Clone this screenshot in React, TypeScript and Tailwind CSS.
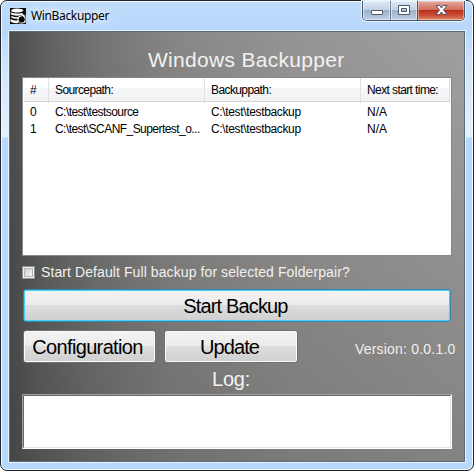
import React from "react";

const rows = [
  { id: "0", source: "C:\\test\\testsource", backup: "C:\\test\\testbackup", next: "N/A" },
  { id: "1", source: "C:\\test\\SCANF_Supertest_o...", backup: "C:\\test\\testbackup", next: "N/A" },
];

function AppIcon() {
  return (
    <svg width="16" height="16" viewBox="0 0 16 16">
      <rect width="16" height="16" fill="#0a0a0a" />
      <path d="M2 1.500Q6 -.3 12 1.200L13.500 2.500Q12 4.500 8 4.500Q3 4.500 1 3Z" fill="#fff" />
      <path d="M.5 4.200Q4 6.400 12.500 5V7Q5 8.500 1 6.500ZM1 8Q5 9.800 9 8.800L8 10.600Q4 11 1.500 9.800ZM.5 11Q3 13 7.500 12.300L8.500 15Q3.500 15.800 .5 13.500Z" fill="#fff" />
      <path d="M9.500 7.800L12 6.200L15.500 7V14.500L12.500 15.600H9L7.500 12.500V10Z" fill="#fff" />
      <circle cx="11.700" cy="11.500" r="3.100" fill="#050505" />
      <path d="M10.500 7.500L13 9M15 6V8.500M8.500 14.500L10.500 15.500" stroke="#111" />
    </svg>
  );
}

function CaptionButtons() {
  return (
    <div className="flex h-[20px] w-[103px] overflow-hidden rounded-b-[5px] border border-t-0 border-[#4c5a70] shadow-[0_0_0_1px_#e6f2ff]">
      <div className="flex w-[28px] items-center justify-center border-r border-[#6b7c94] bg-[linear-gradient(#dce8f5_0%,#c3d3e5_45%,#9cb0c9_50%,#bdd1e8_100%)] pb-px shadow-[inset_0_0_0_1px_#ffffff80]">
        <svg width="14" height="14" viewBox="0 0 14 14">
          <rect x="1.500" y="7.500" width="11" height="4" rx=".5" fill="#fff" stroke="#535666" />
        </svg>
      </div>
      <div className="flex w-[27px] items-center justify-center border-r border-[#6b4450] bg-[linear-gradient(#dce8f5_0%,#c3d3e5_45%,#9cb0c9_50%,#bdd1e8_100%)] pb-px shadow-[inset_0_0_0_1px_#ffffff80]">
        <svg width="12" height="12" viewBox="0 0 12 12">
          <path d="M.5 1.500H11.500V10.500H.5ZM3.500 4.500V7.500H8.500V4.500Z" fill="#fff" fillRule="evenodd" stroke="#535666" />
        </svg>
      </div>
      <div className="flex flex-1 items-center justify-center bg-[linear-gradient(#e5a99f_0%,#d2705f_45%,#b8301d_50%,#c94c35_75%,#e08a67_100%)] pb-px shadow-[inset_0_0_0_1px_#ffffff60]">
        <svg width="13" height="12" viewBox="0 0 13 12">
          <path d="M1 1.500H4.500L6.500 4L8.500 1.500H12L8.500 6L12 10.500H8.500L6.500 8L4.500 10.500H1L4.500 6Z" fill="#fff" stroke="#535666" />
        </svg>
      </div>
    </div>
  );
}

function PushButton({ children, className }: { children: React.ReactNode; className: string }) {
  return (
    <button className={`flex h-[33px] items-center justify-center whitespace-nowrap rounded-[3px] border bg-[linear-gradient(#f3f3f3_0%,#ebebeb_49%,#dddddd_50%,#cfcfcf_100%)] text-[20px] leading-none text-black ${className}`}>
      {children}
    </button>
  );
}

export default function App() {
  return (
    <div className="h-[471px] w-[474px] bg-white font-['Liberation_Sans',Arial,sans-serif]">
      <div className="flex h-[471px] flex-col rounded-[7px] border border-[#20242c] bg-[linear-gradient(#c0dcfb_0px,#b7d8fb_30px,#cde3fc_60px,#e6f1fd_136px,#b7d8fb_137px,#b7d8fb_100%)] px-[7px] shadow-[inset_0_0_0_1px_#f4faff]">
        <header className="flex h-[29px] shrink-0 justify-between">
          <div className="flex items-start pl-[2px] pt-[7px]">
            <AppIcon />
            <span className="ml-[5px] whitespace-nowrap font-['Noto_Sans',sans-serif] text-[12px] leading-[15px] tracking-[-0.35px] text-black [text-shadow:0_0_8px_#fff,0_0_8px_#fff]">WinBackupper</span>
          </div>
          <div className="mr-px">
            <CaptionButtons />
          </div>
        </header>
        <main className="h-[433px] shrink-0 border border-[#e7f4ff]">
          <div className="flex h-[431px] flex-col border border-[#5b6c7c] bg-[linear-gradient(#00000000,#0000002e),linear-gradient(92deg,#4c4c4c_0%,#636362_9%,#757574_20%,#888786_36%,#969593_62%,#a1a09e_100%)] px-3">
            <h1 className="mt-[15px] h-[30px] whitespace-nowrap pl-[126px] text-[21px] leading-[25px] tracking-[0.3px] text-[#f2f2f2]">Windows Backupper</h1>
            <section className="h-[179px] w-[430px] shrink-0 border border-[#828790] bg-white text-[12px] text-black">
              <div className="mx-px grid h-[24px] grid-cols-[25px_156px_156px_1fr] border-b border-[#d5d5d5] bg-[linear-gradient(#fff_0%,#fff_42%,#f5f6f7_45%,#f1f2f3_100%)] leading-[25px] tracking-[-0.6px]">
                <span className="border-r border-[#dfe0e1] pl-[6px]">#</span>
                <span className="border-r border-[#dfe0e1] pl-[6px]">Sourcepath:</span>
                <span className="border-r border-[#dfe0e1] pl-[6px]">Backuppath:</span>
                <span className="border-r border-[#dfe0e1] pl-[6px]">Next start time:</span>
              </div>
              <div className="pt-[2px]">
                {rows.map((row) => (
                  <div key={row.id} className="grid h-[17px] grid-cols-[26px_156px_156px_1fr] whitespace-nowrap leading-[17px]">
                    <span className="pl-[7px]">{row.id}</span>
                    <span className="pl-[6px] tracking-[-0.55px]">{row.source}</span>
                    <span className="pl-[6px] tracking-[-0.35px]">{row.backup}</span>
                    <span className="pl-[6px]">{row.next}</span>
                  </div>
                ))}
              </div>
            </section>
            <label className="mt-[8px] flex h-[16px] shrink-0 items-center whitespace-nowrap text-[14px] leading-[16px] tracking-[0.09px] text-[#f0f0f0]">
              <span className="mr-[6px] flex size-[13px] items-center justify-center border border-[#8e8f8f] bg-[#f4f4f4]">
                <span className="size-[9px] border border-[#aeb3b9] bg-[linear-gradient(135deg,#cbcfd5,#f6f6f6)]" />
              </span>
              <span>Start Default Full backup for selected Folderpair?</span>
            </label>
            <PushButton className="ml-px mt-[9px] w-[428px] shrink-0 border-[#3287b4] pr-[3px] tracking-[-0.85px] shadow-[inset_0_0_0_1px_#48d0f7]">Start Backup</PushButton>
            <div className="mt-[8px] flex h-[33px] shrink-0 items-center">
              <PushButton className="ml-px w-[133px] shrink-0 border-[#707070] pr-[4px] tracking-[-0.65px] shadow-[inset_0_0_0_1px_#fbfbfb]">Configuration</PushButton>
              <PushButton className="ml-[8px] w-[134px] shrink-0 border-[#707070] pr-[3px] tracking-[-0.9px] shadow-[inset_0_0_0_1px_#fbfbfb]">Update</PushButton>
              <span className="ml-[57px] mt-[5px] whitespace-nowrap text-[14px] leading-[16px] tracking-[0.2px] text-[#f0f0f0]">Version: 0.0.1.0</span>
            </div>
            <h2 className="mb-[6px] mt-[4px] h-[21px] shrink-0 pl-[190px] text-[20px] leading-[25px] tracking-[-0.2px] text-[#f2f2f2]">Log:</h2>
            <div className="h-[55px] w-[430px] shrink-0 border border-b-white border-l-[#a0a0a0] border-r-white border-t-[#a0a0a0]">
              <div className="h-full border border-b-[#e3e3e3] border-l-[#696969] border-r-[#e3e3e3] border-t-[#696969] bg-white" />
            </div>
          </div>
        </main>
      </div>
    </div>
  );
}
